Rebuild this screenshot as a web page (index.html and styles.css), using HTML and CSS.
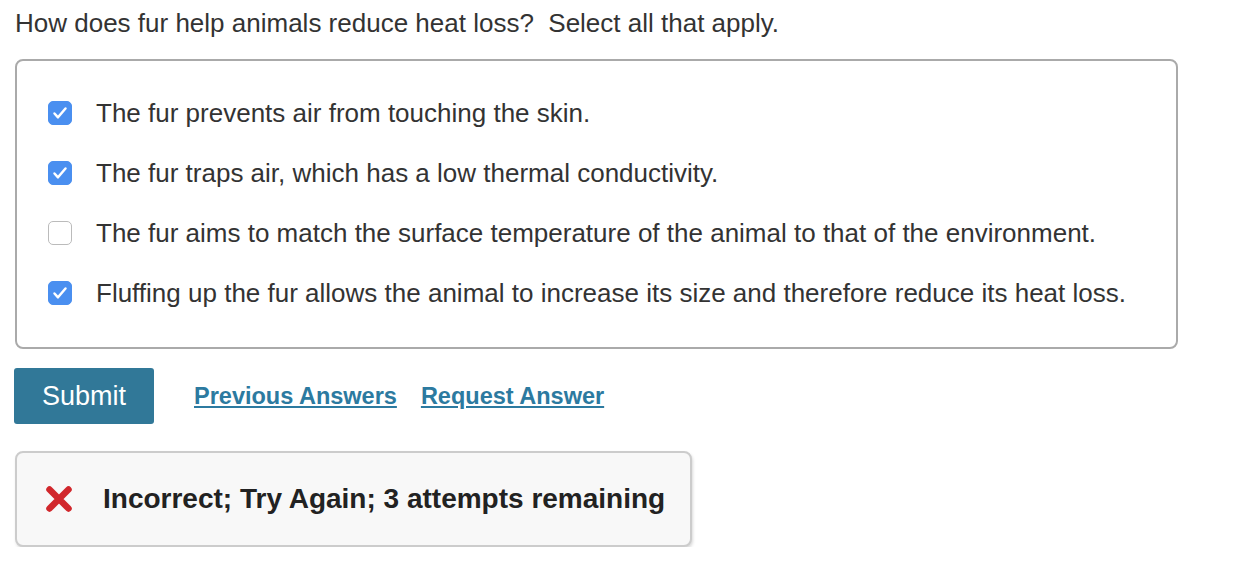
FILE: index.html
```html
<!DOCTYPE html>
<html lang="en">
<head>
    <meta charset="UTF-8">
    <title>Question</title>
    <link rel="stylesheet" href="styles.css">
</head>
<body>
    <p class="question">How does fur help animals reduce heat loss?&nbsp; Select all that apply.</p>

    <!-- Answer choices -->
    <div class="choices">
        <label class="choice">
            <span class="box checked">
                <svg viewBox="0 0 24 24" width="24" height="24"><path d="M6.5 12.5l3.5 3.8 7.5-8.8" fill="none" stroke="#fff" stroke-width="2.5" stroke-linecap="round" stroke-linejoin="round"/></svg>
            </span>
            <span>The fur prevents air from touching the skin.</span>
        </label>
        <label class="choice">
            <span class="box checked">
                <svg viewBox="0 0 24 24" width="24" height="24"><path d="M6.5 12.5l3.5 3.8 7.5-8.8" fill="none" stroke="#fff" stroke-width="2.5" stroke-linecap="round" stroke-linejoin="round"/></svg>
            </span>
            <span>The fur traps air, which has a low thermal conductivity.</span>
        </label>
        <label class="choice">
            <span class="box"></span>
            <span>The fur aims to match the surface temperature of the animal to that of the environment.</span>
        </label>
        <label class="choice">
            <span class="box checked">
                <svg viewBox="0 0 24 24" width="24" height="24"><path d="M6.5 12.5l3.5 3.8 7.5-8.8" fill="none" stroke="#fff" stroke-width="2.5" stroke-linecap="round" stroke-linejoin="round"/></svg>
            </span>
            <span>Fluffing up the fur allows the animal to increase its size and therefore reduce its heat loss.</span>
        </label>
    </div>

    <div class="actions">
        <button class="submit">Submit</button>
        <a href="#" class="link">Previous Answers</a>
        <a href="#" class="link">Request Answer</a>
    </div>

    <div class="feedback">
        <svg class="cross" viewBox="0 0 28 26" width="28" height="26"><path d="M4.5 3.5l19 19M23.5 3.5l-19 19" stroke="#d1272c" stroke-width="6.5" stroke-linecap="round"/></svg>
        <span>Incorrect; Try Again; 3 attempts remaining</span>
    </div>
</body>
</html>
```

FILE: styles.css
```css
body {
    font-family: "Liberation Sans", Arial, sans-serif;
    margin: 0;
    padding: 0 15px;
    color: #333;
    background: #fff;
}
.question {
    font-size: 26px;
    line-height: 30px;
    margin: 8px 0 21px;
}
.choices {
    width: 1163px;
    border: 2px solid #aaa;
    border-radius: 8px;
    padding: 22px 0 24px;
    box-sizing: border-box;
}
.choice {
    display: flex;
    align-items: center;
    gap: 24px;
    height: 60px;
    padding-left: 31px;
    font-size: 26px;
    color: #333;
}
.box {
    width: 24px;
    height: 24px;
    border-radius: 5px;
    border: 1px solid #bbb;
    box-sizing: border-box;
    background: #fff;
    display: flex;
}
.box.checked {
    background: #4a8ff0;
    border-color: #4a8ff0;
}
.box svg {
    margin: -1px;
}
.actions {
    display: flex;
    align-items: center;
    margin-top: 19px;
}
.submit {
    font-family: inherit;
    font-size: 27px;
    color: #fff;
    background: #317898;
    border: none;
    border-radius: 3px;
    width: 140px;
    height: 56px;
    margin-left: -1px;
    margin-right: 40px;
}
.link {
    font-size: 23.5px;
    font-weight: bold;
    color: #2c7aa0;
    margin-right: 24px;
}
.feedback {
    display: flex;
    align-items: center;
    width: 677px;
    height: 96px;
    margin-top: 27px;
    box-sizing: border-box;
    background: #f8f8f8;
    border: 2px solid #ccc;
    border-radius: 8px;
    box-shadow: 1px 2px 3px rgba(0, 0, 0, 0.15);
    padding-left: 28px;
    font-size: 28px;
    font-weight: bold;
    color: #222;
}
.cross {
    margin-right: 30px;
}
```
